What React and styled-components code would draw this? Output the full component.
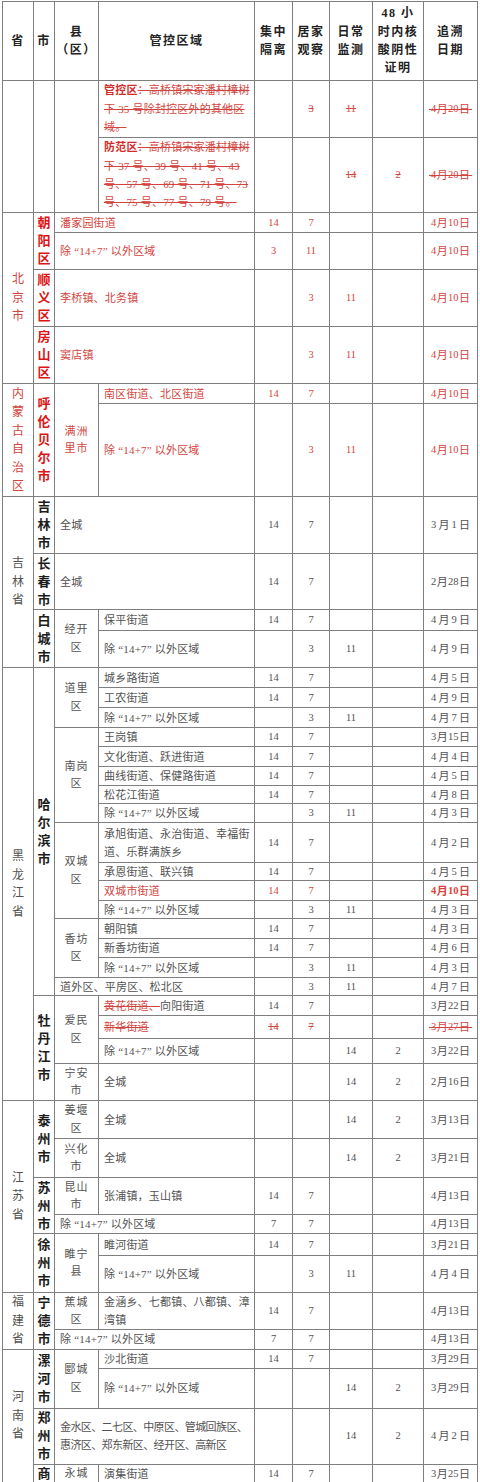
import React from 'react';
import styled, { createGlobalStyle } from 'styled-components';

const GlobalStyle = createGlobalStyle`
  html, body {
    margin: 0;
    padding: 0;
    background: #ffffff;
  }
  body {
    font-family: "Liberation Serif", "Noto Sans CJK SC", serif;
  }
`;

const ink = {
  text: '#525252',
  dark: '#1c1c1c',
  red: '#d4443e',
  deep: '#dc1414',
  line: '#7f7f7f',
};

const Sheet = styled.table`
  margin: 1px 0 0 2px;
  width: 475px;
  border-collapse: collapse;
  table-layout: fixed;
  font-family: "Liberation Serif", "Noto Sans CJK SC", serif;
  font-size: 11px;
  color: ${ink.text};
`;

const Row = styled.tr`
  height: ${p => p.$h}px;
`;

const HeadCell = styled.th`
  border: 1px solid ${ink.line};
  padding: 0;
  font-size: 12px;
  font-weight: 700;
  letter-spacing: 1.5px;
  line-height: 18.3px;
  color: #222222;
  text-align: center;
  vertical-align: middle;
`;

const ProvCell = styled.td`
  border: 1px solid ${ink.line};
  padding: 0;
  font-size: 12px;
  line-height: 18.5px;
  color: ${p => (p.$red ? ink.red : ink.text)};
  text-align: center;
  vertical-align: middle;
`;

const CityCell = styled.td`
  border: 1px solid ${ink.line};
  padding: 0;
  font-size: 13px;
  font-weight: 700;
  line-height: 18px;
  color: ${p => (p.$red ? ink.deep : ink.dark)};
  text-align: center;
  vertical-align: middle;
`;

const CountyCell = styled.td`
  border: 1px solid ${ink.line};
  padding: 0;
  font-size: 11px;
  letter-spacing: 1px;
  line-height: 17.5px;
  color: ${p => (p.$red ? ink.red : ink.text)};
  text-align: center;
  vertical-align: middle;
`;

const AreaCell = styled.td`
  border: 1px solid ${ink.line};
  padding: 0 0 0 5px;
  font-size: 11px;
  letter-spacing: ${p => (p.$tight ? '-0.6px' : '0.2px')};
  line-height: ${p => p.$lh || 16}px;
  white-space: nowrap;
  overflow: hidden;
  color: ${p => (p.$red ? ink.red : ink.text)};
  text-align: left;
  vertical-align: middle;
`;

const NumCell = styled.td`
  border: 1px solid ${ink.line};
  padding: 0;
  font-size: 10.5px;
  line-height: 16px;
  color: ${p => (p.$red ? ink.red : ink.text)};
  text-align: center;
  vertical-align: middle;
`;

const Vertical = styled.span`
  display: block;
  width: 1em;
  margin: 0 auto;
  word-break: break-all;
`;

const Lead = styled.span`
  font-weight: 700;
  color: #d42a2a;
`;

const Struck = styled.span`
  color: ${ink.red};
  text-decoration: line-through;
  text-decoration-color: ${ink.red};
`;

const DateBox = styled.span`
  position: relative;
  display: inline-flex;
  justify-content: space-between;
  align-items: center;
  width: 39px;
  font-size: 10.5px;
  font-weight: ${p => (p.$bold ? 700 : 400)};

  &::after {
    content: '';
    display: ${p => (p.$strike ? 'block' : 'none')};
    position: absolute;
    left: -2px;
    right: -2px;
    top: 50%;
    border-top: 1px solid ${ink.red};
  }
`;

const MonthGlyph = styled.span`
  font-size: 11px;
`;

function Mark({ value, strike }) {
  if (!value) return null;
  return strike ? <Struck>{value}</Struck> : value;
}

function DateText({ value, strike, bold }) {
  const [m, d] = value.split('-');
  return (
    <DateBox $strike={strike} $bold={bold}>
      <span>{m}</span>
      <MonthGlyph>月</MonthGlyph>
      <span>{d}</span>
      <MonthGlyph>日</MonthGlyph>
    </DateBox>
  );
}

function Figures({ a, b, c, d, date, red, strike, bold }) {
  return (
    <>
      <NumCell $red={red}><Mark value={a} strike={strike} /></NumCell>
      <NumCell $red={red}><Mark value={b} strike={strike} /></NumCell>
      <NumCell $red={red}><Mark value={c} strike={strike} /></NumCell>
      <NumCell $red={red}><Mark value={d} strike={strike} /></NumCell>
      <NumCell $red={red}><DateText value={date} strike={strike} bold={bold} /></NumCell>
    </>
  );
}

function Prov({ name, rows, red }) {
  return (
    <ProvCell rowSpan={rows} $red={red}>
      <Vertical>{name}</Vertical>
    </ProvCell>
  );
}

function City({ name, rows, red }) {
  return (
    <CityCell rowSpan={rows} $red={red}>
      <Vertical>{name}</Vertical>
    </CityCell>
  );
}

function County({ name, rows, red }) {
  const parts = name.match(/.{1,2}/g);
  return (
    <CountyCell rowSpan={rows} $red={red}>
      {parts.map((p, i) => (
        <React.Fragment key={i}>
          {i > 0 && <br />}
          {p}
        </React.Fragment>
      ))}
    </CountyCell>
  );
}

const OUTSIDE = '除 “14+7” 以外区域';

export default function App() {
  return (
    <>
      <GlobalStyle />
      <Sheet>
        <colgroup>
          <col style={{ width: 31 }} />
          <col style={{ width: 21 }} />
          <col style={{ width: 44 }} />
          <col style={{ width: 156 }} />
          <col style={{ width: 38 }} />
          <col style={{ width: 37 }} />
          <col style={{ width: 43 }} />
          <col style={{ width: 51 }} />
          <col style={{ width: 54 }} />
        </colgroup>
        <thead>
          <Row $h={79}>
            <HeadCell>省</HeadCell>
            <HeadCell>市</HeadCell>
            <HeadCell>县<br />（区）</HeadCell>
            <HeadCell>管控区域</HeadCell>
            <HeadCell>集中<br />隔离</HeadCell>
            <HeadCell>居家<br />观察</HeadCell>
            <HeadCell>日常<br />监测</HeadCell>
            <HeadCell>48 小<br />时内核<br />酸阴性<br />证明</HeadCell>
            <HeadCell>追溯<br />日期</HeadCell>
          </Row>
        </thead>
        <tbody>
          <Row $h={57}>
            <ProvCell rowSpan={2} />
            <CityCell rowSpan={2} />
            <CountyCell rowSpan={2} />
            <AreaCell $red $lh={18.5}>
              <Lead>管控区</Lead>
              <Struck>：高桥镇宋家潘村樟树<br />下 35 号除封控区外的其他区<br />域。</Struck>
            </AreaCell>
            <Figures b="3" c="11" date="4-20" red strike />
          </Row>
          <Row $h={75}>
            <AreaCell $red $lh={18.3}>
              <Lead>防范区</Lead>
              <Struck>：高桥镇宋家潘村樟树<br />下 37 号、39 号、41 号、43<br />号、57 号、69 号、71 号、73<br />号、75 号、77 号、79 号。</Struck>
            </AreaCell>
            <Figures c="14" d="2" date="4-20" red strike />
          </Row>

          <Row $h={20}>
            <Prov name="北京市" rows={4} red />
            <City name="朝阳区" rows={2} red />
            <AreaCell colSpan={2} $red>潘家园街道</AreaCell>
            <Figures a="14" b="7" date="4-10" red />
          </Row>
          <Row $h={37}>
            <AreaCell colSpan={2} $red>{OUTSIDE}</AreaCell>
            <Figures a="3" b="11" date="4-10" red />
          </Row>
          <Row $h={57}>
            <City name="顺义区" red />
            <AreaCell colSpan={2} $red>李桥镇、北务镇</AreaCell>
            <Figures b="3" c="11" date="4-10" red />
          </Row>
          <Row $h={57}>
            <City name="房山区" red />
            <AreaCell colSpan={2} $red>窦店镇</AreaCell>
            <Figures b="3" c="11" date="4-10" red />
          </Row>

          <Row $h={20}>
            <Prov name="内蒙古自治区" rows={2} red />
            <City name="呼伦贝尔市" rows={2} red />
            <County name="满洲里市" rows={2} red />
            <AreaCell $red>南区街道、北区街道</AreaCell>
            <Figures a="14" b="7" date="4-10" red />
          </Row>
          <Row $h={93}>
            <AreaCell $red>{OUTSIDE}</AreaCell>
            <Figures b="3" c="11" date="4-10" red />
          </Row>

          <Row $h={57}>
            <Prov name="吉林省" rows={4} />
            <City name="吉林市" />
            <AreaCell colSpan={2}>全城</AreaCell>
            <Figures a="14" b="7" date="3-1" />
          </Row>
          <Row $h={56}>
            <City name="长春市" />
            <AreaCell colSpan={2}>全城</AreaCell>
            <Figures a="14" b="7" date="2-28" />
          </Row>
          <Row $h={21}>
            <City name="白城市" rows={2} />
            <County name="经开区" rows={2} />
            <AreaCell>保平街道</AreaCell>
            <Figures a="14" b="7" date="4-9" />
          </Row>
          <Row $h={37}>
            <AreaCell>{OUTSIDE}</AreaCell>
            <Figures b="3" c="11" date="4-9" />
          </Row>

          <Row $h={20}>
            <Prov name="黑龙江省" rows={20} />
            <City name="哈尔滨市" rows={16} />
            <County name="道里区" rows={3} />
            <AreaCell>城乡路街道</AreaCell>
            <Figures a="14" b="7" date="4-5" />
          </Row>
          <Row $h={20}>
            <AreaCell>工农街道</AreaCell>
            <Figures a="14" b="7" date="4-9" />
          </Row>
          <Row $h={20}>
            <AreaCell>{OUTSIDE}</AreaCell>
            <Figures b="3" c="11" date="4-7" />
          </Row>
          <Row $h={19}>
            <County name="南岗区" rows={5} />
            <AreaCell>王岗镇</AreaCell>
            <Figures a="14" b="7" date="3-15" />
          </Row>
          <Row $h={20}>
            <AreaCell>文化街道、跃进街道</AreaCell>
            <Figures a="14" b="7" date="4-4" />
          </Row>
          <Row $h={19}>
            <AreaCell>曲线街道、保健路街道</AreaCell>
            <Figures a="14" b="7" date="4-5" />
          </Row>
          <Row $h={18}>
            <AreaCell>松花江街道</AreaCell>
            <Figures a="14" b="7" date="4-8" />
          </Row>
          <Row $h={19}>
            <AreaCell>{OUTSIDE}</AreaCell>
            <Figures b="3" c="11" date="4-3" />
          </Row>
          <Row $h={40}>
            <County name="双城区" rows={4} />
            <AreaCell $lh={18}>承旭街道、永治街道、幸福街<br />道、乐群满族乡</AreaCell>
            <Figures a="14" b="7" date="4-2" />
          </Row>
          <Row $h={18}>
            <AreaCell>承恩街道、联兴镇</AreaCell>
            <Figures a="14" b="7" date="4-5" />
          </Row>
          <Row $h={20}>
            <AreaCell $red>双城市街道</AreaCell>
            <Figures a="14" b="7" date="4-10" red bold />
          </Row>
          <Row $h={18}>
            <AreaCell>{OUTSIDE}</AreaCell>
            <Figures b="3" c="11" date="4-3" />
          </Row>
          <Row $h={20}>
            <County name="香坊区" rows={3} />
            <AreaCell>朝阳镇</AreaCell>
            <Figures a="14" b="7" date="4-3" />
          </Row>
          <Row $h={19}>
            <AreaCell>新香坊街道</AreaCell>
            <Figures a="14" b="7" date="4-6" />
          </Row>
          <Row $h={20}>
            <AreaCell>{OUTSIDE}</AreaCell>
            <Figures b="3" c="11" date="4-3" />
          </Row>
          <Row $h={18}>
            <AreaCell colSpan={2}>道外区、平房区、松北区</AreaCell>
            <Figures b="3" c="11" date="4-7" />
          </Row>
          <Row $h={20}>
            <City name="牡丹江市" rows={4} />
            <County name="爱民区" rows={3} />
            <AreaCell><Struck>黄花街道、</Struck>向阳街道</AreaCell>
            <Figures a="14" b="7" date="3-22" />
          </Row>
          <Row $h={23}>
            <AreaCell><Struck>新华街道</Struck></AreaCell>
            <Figures a="14" b="7" date="3-27" red strike />
          </Row>
          <Row $h={25}>
            <AreaCell>{OUTSIDE}</AreaCell>
            <Figures c="14" d="2" date="3-22" />
          </Row>
          <Row $h={37}>
            <County name="宁安市" />
            <AreaCell>全城</AreaCell>
            <Figures c="14" d="2" date="2-16" />
          </Row>

          <Row $h={38}>
            <Prov name="江苏省" rows={6} />
            <City name="泰州市" rows={2} />
            <County name="姜堰区" />
            <AreaCell>全城</AreaCell>
            <Figures c="14" d="2" date="3-13" />
          </Row>
          <Row $h={39}>
            <County name="兴化市" />
            <AreaCell>全城</AreaCell>
            <Figures c="14" d="2" date="3-21" />
          </Row>
          <Row $h={37}>
            <City name="苏州市" rows={2} />
            <County name="昆山市" />
            <AreaCell>张浦镇，玉山镇</AreaCell>
            <Figures a="14" b="7" date="4-13" />
          </Row>
          <Row $h={19}>
            <AreaCell colSpan={2}>{OUTSIDE}</AreaCell>
            <Figures a="7" b="7" date="4-13" />
          </Row>
          <Row $h={22}>
            <City name="徐州市" rows={2} />
            <County name="睢宁县" rows={2} />
            <AreaCell>睢河街道</AreaCell>
            <Figures a="14" b="7" date="3-21" />
          </Row>
          <Row $h={37}>
            <AreaCell>{OUTSIDE}</AreaCell>
            <Figures b="3" c="11" date="4-4" />
          </Row>

          <Row $h={37}>
            <Prov name="福建省" rows={2} />
            <City name="宁德市" rows={2} />
            <County name="蕉城区" />
            <AreaCell $lh={18}>金涵乡、七都镇、八都镇、漳<br />湾镇</AreaCell>
            <Figures a="14" b="7" date="4-13" />
          </Row>
          <Row $h={19}>
            <AreaCell colSpan={2}>{OUTSIDE}</AreaCell>
            <Figures a="7" b="7" date="4-13" />
          </Row>

          <Row $h={19}>
            <Prov name="河南省" rows={4} />
            <City name="漯河市" rows={2} />
            <County name="郾城区" rows={2} />
            <AreaCell>沙北街道</AreaCell>
            <Figures a="14" b="7" date="3-29" />
          </Row>
          <Row $h={40}>
            <AreaCell>{OUTSIDE}</AreaCell>
            <Figures c="14" d="2" date="3-29" />
          </Row>
          <Row $h={56}>
            <City name="郑州市" />
            <AreaCell colSpan={2} $lh={18} $tight>
              金水区、二七区、中原区、管城回族区、<br />惠济区、郑东新区、经开区、高新区
            </AreaCell>
            <Figures c="14" d="2" date="4-2" />
          </Row>
          <Row $h={18}>
            <City name="商" />
            <County name="永城" />
            <AreaCell>演集街道</AreaCell>
            <Figures a="14" b="7" date="3-25" />
          </Row>
        </tbody>
      </Sheet>
    </>
  );
}
